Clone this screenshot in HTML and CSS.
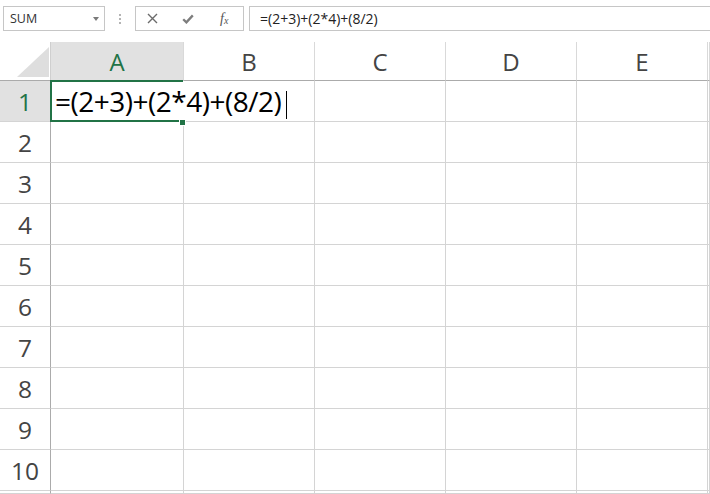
FILE: index.html
```html
<!DOCTYPE html>
<html>
<head>
<meta charset="utf-8">
<link rel="stylesheet" href="styles.css">
</head>
<body>
<div class="toolbar">
  <div class="namebox"><span>SUM</span><span class="caret"></span></div>
  <div class="grip"><i></i><i></i><i></i></div>
  <div class="fbtns">
    <div class="slot s1"><svg width="11" height="11" viewBox="0 0 11 11"><path d="M1 1 L10 10 M10 1 L1 10" stroke="#6b6b6b" stroke-width="1.4" fill="none"/></svg></div>
    <div class="slot s2"><svg width="12" height="10" viewBox="0 0 12 10"><path d="M1.2 5.2 L4.4 8.4 L10.8 1.4" stroke="#7d7d7d" stroke-width="2.3" fill="none"/></svg></div>
    <div class="slot s3"><span class="fx">f<span class="fxx">x</span></span></div>
  </div>
  <div class="fbar">=(2+3)+(2*4)+(8/2)</div>
</div>
<div class="sheet">
  <div class="cell corner"><svg width="50" height="38" viewBox="0 0 50 38"><polygon points="17,35 49,35 49,5" fill="#dedede"/></svg></div>
  <div class="cell colhead sel">A</div>
  <div class="cell colhead">B</div>
  <div class="cell colhead">C</div>
  <div class="cell colhead">D</div>
  <div class="cell colhead">E</div>
  <div class="cell colhead"></div>

  <div class="cell rowhead sel">1</div>
  <div class="cell"><span class="editor">=(2+3)+(2*4)+(8/2)<span class="cursor"></span></span></div>
  <div class="cell"></div><div class="cell"></div><div class="cell"></div><div class="cell"></div><div class="cell"></div>

  <div class="cell rowhead">2</div>
  <div class="cell"></div><div class="cell"></div><div class="cell"></div><div class="cell"></div><div class="cell"></div><div class="cell"></div>
  <div class="cell rowhead">3</div>
  <div class="cell"></div><div class="cell"></div><div class="cell"></div><div class="cell"></div><div class="cell"></div><div class="cell"></div>
  <div class="cell rowhead">4</div>
  <div class="cell"></div><div class="cell"></div><div class="cell"></div><div class="cell"></div><div class="cell"></div><div class="cell"></div>
  <div class="cell rowhead">5</div>
  <div class="cell"></div><div class="cell"></div><div class="cell"></div><div class="cell"></div><div class="cell"></div><div class="cell"></div>
  <div class="cell rowhead">6</div>
  <div class="cell"></div><div class="cell"></div><div class="cell"></div><div class="cell"></div><div class="cell"></div><div class="cell"></div>
  <div class="cell rowhead">7</div>
  <div class="cell"></div><div class="cell"></div><div class="cell"></div><div class="cell"></div><div class="cell"></div><div class="cell"></div>
  <div class="cell rowhead">8</div>
  <div class="cell"></div><div class="cell"></div><div class="cell"></div><div class="cell"></div><div class="cell"></div><div class="cell"></div>
  <div class="cell rowhead">9</div>
  <div class="cell"></div><div class="cell"></div><div class="cell"></div><div class="cell"></div><div class="cell"></div><div class="cell"></div>
  <div class="cell rowhead">10</div>
  <div class="cell"></div><div class="cell"></div><div class="cell"></div><div class="cell"></div><div class="cell"></div><div class="cell"></div>
  <div class="cell rowhead"></div>
  <div class="cell"></div><div class="cell"></div><div class="cell"></div><div class="cell"></div><div class="cell"></div><div class="cell"></div>

  <div class="selection"><span class="handle"></span></div>
</div>
</body>
</html>
```
FILE: styles.css
```css
* { box-sizing: border-box; }
html, body { margin: 0; padding: 0; }
body {
  width: 710px;
  height: 494px;
  overflow: hidden;
  background: #fff;
  font-family: "Open Sans", "Noto Sans", sans-serif;
}

.toolbar {
  display: flex;
  align-items: flex-start;
  height: 42px;
  padding-top: 6px;
}
.namebox {
  margin-left: 3px;
  width: 102px;
  height: 25px;
  border: 1px solid #c6c6c6;
  display: flex;
  align-items: center;
  justify-content: space-between;
  padding: 0 5px 0 6px;
  font-size: 12.5px;
  color: #333;
}
.caret {
  width: 0;
  height: 0;
  border-left: 3.5px solid transparent;
  border-right: 3.5px solid transparent;
  border-top: 4px solid #7a7a7a;
}
.grip {
  width: 30px;
  height: 25px;
  display: flex;
  flex-direction: column;
  align-items: center;
  justify-content: center;
  gap: 2px;
}
.grip i {
  display: block;
  width: 2px;
  height: 2px;
  background: #b4b4b4;
}
.fbtns {
  width: 109px;
  height: 25px;
  border: 1px solid #c6c6c6;
  display: flex;
  align-items: center;
}
.slot {
  display: flex;
  align-items: center;
  justify-content: center;
  height: 23px;
}
.s1 { width: 34px; }
.s2 { width: 36px; }
.s3 { width: 38px; }
.slot svg { display: block; }
.fx {
  font-family: "Liberation Serif", serif;
  font-style: italic;
  font-size: 14px;
  color: #555;
  line-height: 1;
}
.fxx {
  font-size: 10px;
  position: relative;
  top: 1px;
}
.fbar {
  flex: 1;
  margin-left: 5px;
  height: 25px;
  border: 1px solid #c6c6c6;
  border-right: 0;
  padding-left: 10px;
  font-size: 14px;
  line-height: 23px;
  color: #222;
  white-space: nowrap;
  overflow: hidden;
}

.sheet {
  position: relative;
  display: grid;
  grid-template-columns: 51px 133px repeat(4, 131px) 2px;
  grid-template-rows: 39px repeat(10, 41px) 3px;
  height: 452px;
  overflow: hidden;
}
.cell {
  border-right: 1px solid #d4d4d4;
  border-bottom: 1px solid #d4d4d4;
  overflow: visible;
}
.corner {
  border-right-color: #cfcfcf;
  border-bottom-color: #ababab;
}
.corner svg { display: block; }
.colhead {
  border-right-color: #d9d9d9;
  border-bottom-color: #ababab;
  font-size: 24px;
  line-height: 39px;
  text-align: center;
  color: #444;
}
.rowhead {
  border-right-color: #ababab;
  font-size: 24.5px;
  line-height: 41px;
  text-align: center;
  color: #444;
}
.sel {
  background: #e1e1e1;
  color: #217346;
}

.editor {
  position: relative;
  z-index: 2;
  display: inline-block;
  white-space: nowrap;
  background: #fff;
  width: 246px;
  height: 40px;
  padding-left: 4px;
  font-size: 28px;
  letter-spacing: -0.5px;
  line-height: 40px;
  color: #000;
}
.cursor {
  display: inline-block;
  width: 1px;
  height: 28px;
  background: #000;
  vertical-align: middle;
  margin-left: 5px;
}

.selection {
  position: absolute;
  left: 50px;
  top: 38px;
  width: 133px;
  height: 42px;
  border: 2px solid #217346;
  border-right: 0;
  z-index: 3;
}
.handle {
  position: absolute;
  left: 127px;
  top: 37px;
  width: 7px;
  height: 7px;
  background: #217346;
  border: 1px solid #fff;
}
```
